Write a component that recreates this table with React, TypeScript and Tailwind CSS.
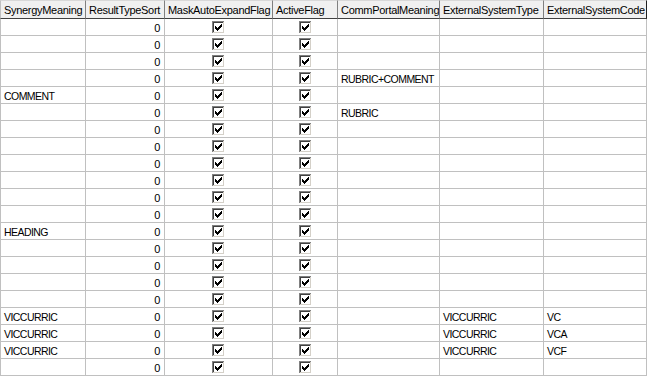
import React from "react";

type Row = [string, string, string, string];

const rows: Row[] = [
  ["", "", "", ""],
  ["", "", "", ""],
  ["", "", "", ""],
  ["", "RUBRIC+COMMENT", "", ""],
  ["COMMENT", "", "", ""],
  ["", "RUBRIC", "", ""],
  ["", "", "", ""],
  ["", "", "", ""],
  ["", "", "", ""],
  ["", "", "", ""],
  ["", "", "", ""],
  ["", "", "", ""],
  ["HEADING", "", "", ""],
  ["", "", "", ""],
  ["", "", "", ""],
  ["", "", "", ""],
  ["", "", "", ""],
  ["VICCURRIC", "", "VICCURRIC", "VC"],
  ["VICCURRIC", "", "VICCURRIC", "VCA"],
  ["VICCURRIC", "", "VICCURRIC", "VCF"],
  ["", "", "", ""],
];

const headers = [
  "SynergyMeaning",
  "ResultTypeSort",
  "MaskAutoExpandFlag",
  "ActiveFlag",
  "CommPortalMeaning",
  "ExternalSystemType",
  "ExternalSystemCode",
];

const checkPixels: [number, number][] = [
  [9, 3],
  [8, 4], [9, 4],
  [3, 5], [7, 5], [8, 5], [9, 5],
  [3, 6], [4, 6], [6, 6], [7, 6], [8, 6],
  [3, 7], [4, 7], [5, 7], [6, 7], [7, 7],
  [4, 8], [5, 8], [6, 8],
  [5, 9],
];

function CheckBox() {
  return (
    <svg width="13" height="13" viewBox="0 0 13 13" shapeRendering="crispEdges" className="block">
      <rect x="0" y="0" width="13" height="13" fill="#ffffff" />
      <rect x="0" y="0" width="12" height="1" fill="#808080" />
      <rect x="0" y="0" width="1" height="12" fill="#808080" />
      <rect x="1" y="1" width="10" height="1" fill="#404040" />
      <rect x="1" y="1" width="1" height="10" fill="#404040" />
      <rect x="1" y="11" width="11" height="1" fill="#d4d0c8" />
      <rect x="11" y="1" width="1" height="11" fill="#d4d0c8" />
      {checkPixels.map(([x, y], i) => (
        <rect key={i} x={x} y={y} width="1" height="1" fill="#000000" />
      ))}
    </svg>
  );
}

const cell = "h-[17px] border-r border-b border-[#c0c0c0] flex items-center overflow-hidden whitespace-nowrap";
const textCell = `${cell} pt-[4px] pl-[3px] text-[10.5px] tracking-[-0.55px]`;

export default function App() {
  return (
    <div
      className="w-[649px] h-[377px] bg-white overflow-hidden text-[11px] tracking-[-0.3px] text-black"
      style={{ fontFamily: '"Liberation Sans", Arial, sans-serif' }}
    >
      <div className="grid grid-cols-[86px_79px_108px_65px_102px_104px_103px] w-[647px]">
        {headers.map((h, i) => (
          <div
            key={h}
            className={`h-[19px] bg-[#f0f0f0] border-t border-t-[#d8d8d8] border-b border-b-[#404040] border-r flex items-center pt-[1px] pl-[3px] whitespace-nowrap overflow-hidden ${
              i === headers.length - 1 ? "border-r-[#202020]" : "border-r-[#808080]"
            } ${i === 0 ? "border-l border-l-[#c0c0c0]" : ""}`}
          >
            {h}
          </div>
        ))}
        {rows.map((r, ri) => (
          <React.Fragment key={ri}>
            <div className={`${textCell} border-l`}>{r[0]}</div>
            <div className={`${cell} pt-[3px] justify-end pr-[4px]`}>0</div>
            <div className={`${cell} justify-center`}>
              <CheckBox />
            </div>
            <div className={`${cell} justify-center`}>
              <CheckBox />
            </div>
            <div className={textCell}>{r[1]}</div>
            <div className={textCell}>{r[2]}</div>
            <div className={textCell}>{r[3]}</div>
          </React.Fragment>
        ))}
      </div>
    </div>
  );
}
